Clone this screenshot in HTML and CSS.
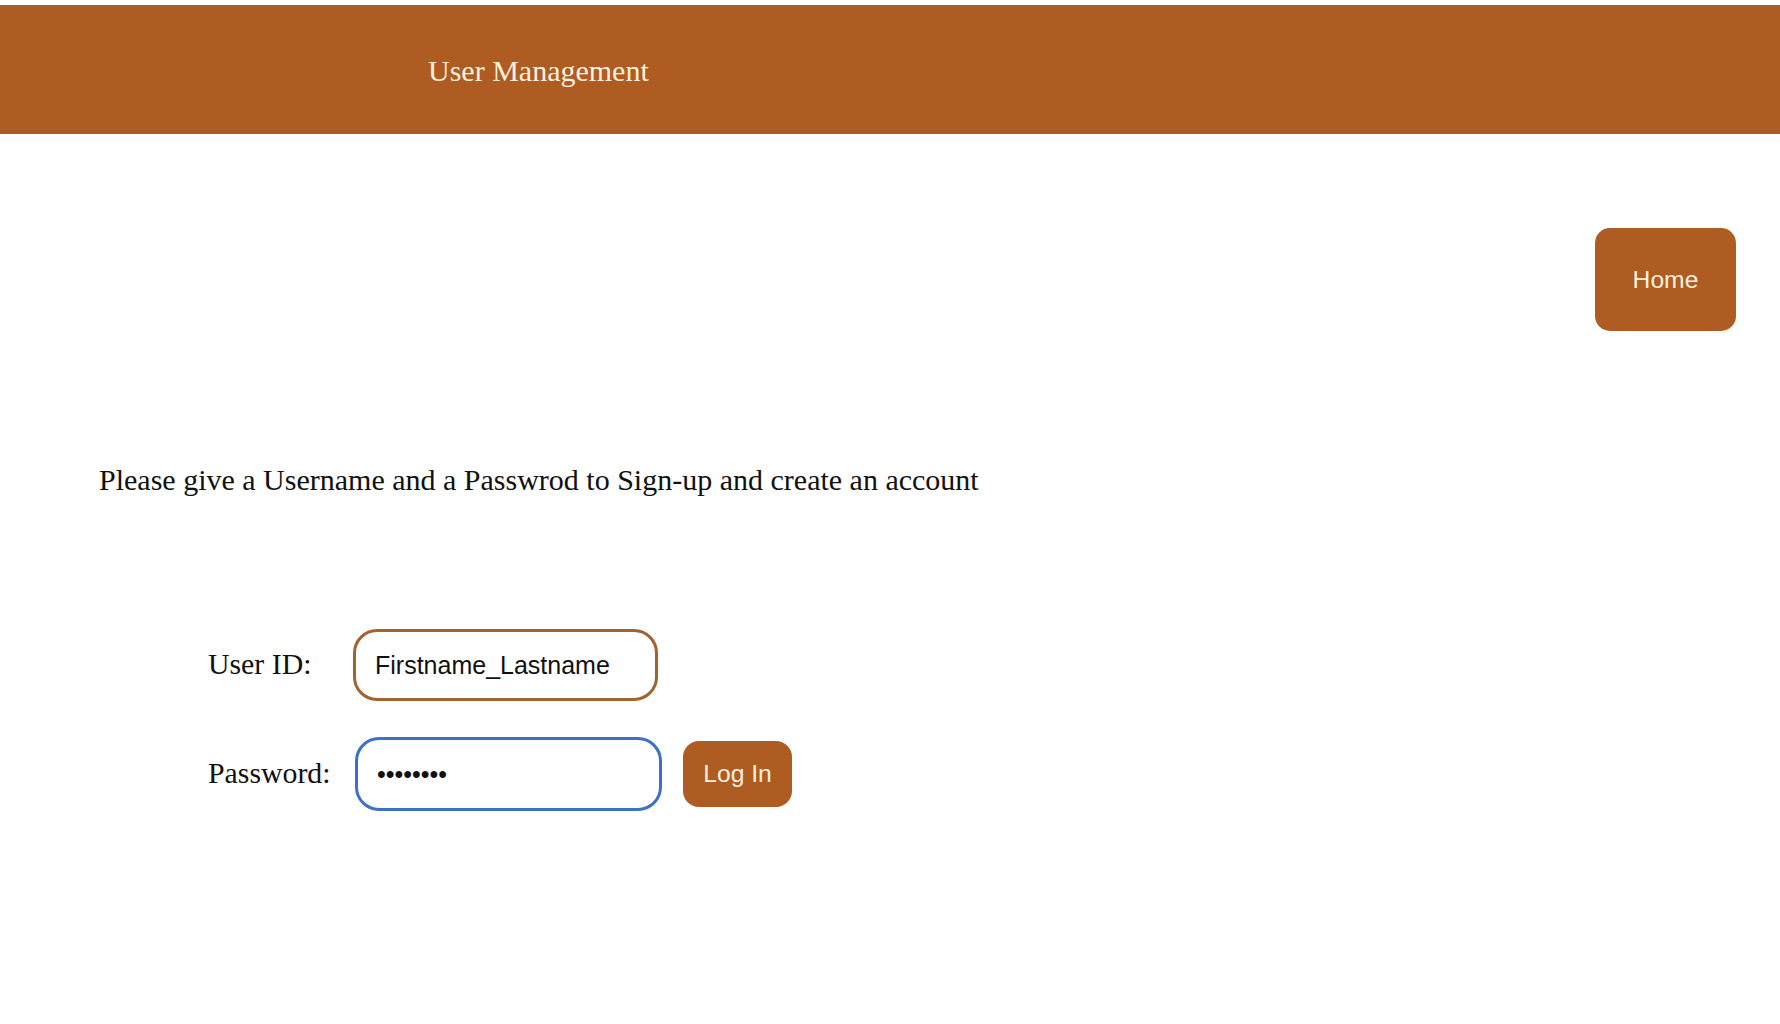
FILE: index.html
```html
<!DOCTYPE html>
<html lang="en">
<head>
<meta charset="utf-8">
<title>User Management</title>
<link rel="stylesheet" href="styles.css">
</head>
<body>
<header class="topbar">
  <h1 class="topbar-title">User Management</h1>
</header>
<main class="content">
  <nav class="nav-row">
    <button class="btn btn-home" type="button">Home</button>
  </nav>
  <p class="prompt">Please give a Username and a Passwrod to Sign-up and create an account</p>
  <form class="login-form">
    <label class="field-label" for="uid">User ID:</label>
    <div class="field-cell">
      <input class="field field-user" id="uid" type="text" value="Firstname_Lastname">
    </div>
    <label class="field-label" for="pwd">Password:</label>
    <div class="field-cell">
      <input class="field field-pass" id="pwd" type="password" value="12345678">
      <button class="btn btn-login" type="button">Log In</button>
    </div>
  </form>
</main>
</body>
</html>
```
FILE: styles.css
```css
html, body {
  margin: 0;
  padding: 0;
  background: #ffffff;
}

body {
  padding-top: 5px;
  font-family: "Liberation Serif", "Times New Roman", serif;
  color: #111111;
}

.topbar {
  height: 129px;
  background: #ae5c22;
  display: flex;
  align-items: center;
  padding-left: 428px;
}

.topbar-title {
  margin: 0;
  font-weight: normal;
  font-size: 30px;
  color: #fcf0de;
  line-height: 1;
  padding-top: 2px;
}

.content {
  display: flex;
  flex-direction: column;
}

.nav-row {
  display: flex;
  justify-content: flex-end;
  padding: 94px 44px 0 0;
}

.btn {
  background: #ae5c22;
  color: #fcf0de;
  border: none;
  font-family: "Liberation Sans", Arial, sans-serif;
  font-size: 24.7px;
  cursor: pointer;
}

.btn-home {
  width: 141px;
  height: 103px;
  border-radius: 15px;
}

.prompt {
  margin: 132px 0 0 99px;
  font-size: 30px;
}

.login-form {
  margin: 132px 0 0 208px;
  display: grid;
  grid-template-columns: 145px auto;
  row-gap: 36px;
  align-items: center;
  justify-content: start;
}

.field-label {
  font-size: 29.8px;
  margin-top: -2px;
}

.field-cell {
  display: flex;
  align-items: center;
  gap: 21px;
}

.field {
  box-sizing: border-box;
  width: 305px;
  height: 72px;
  border-radius: 24px;
  border: 3px solid #a2632f;
  padding: 0 0 0 19px;
  font-family: "Liberation Sans", Arial, sans-serif;
  font-size: 25px;
  color: #111111;
  background: #ffffff;
  outline: none;
}

.field-pass {
  width: 307px;
  height: 74px;
  margin-left: 2px;
  border-color: #3d70c6;
}

.btn-login {
  width: 109px;
  height: 66px;
  border-radius: 16px;
}
```
